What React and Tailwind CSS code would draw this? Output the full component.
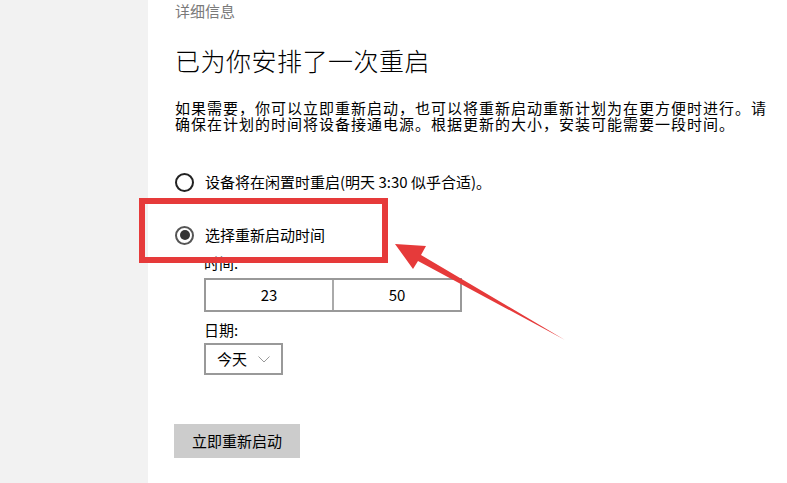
import React from "react";

const font = { fontFamily: '"Noto Sans CJK SC", "Noto Sans", sans-serif' };

function Radio({ checked, label }) {
  return (
    <div className="flex items-center h-[20px]">
      <span
        className={
          "w-[19px] h-[19px] rounded-full border-2 flex items-center justify-center " +
          (checked ? "border-[#555]" : "border-[#222]")
        }
      >
        {checked && <span className="w-[10px] h-[10px] rounded-full bg-[#333]" />}
      </span>
      <span className="ml-[11px] text-[15px] leading-[20px] text-black">{label}</span>
    </div>
  );
}

export default function App() {
  return (
    <div className="relative flex h-[483px] w-[787px] overflow-hidden bg-white" style={font}>
      {/* 侧边栏 */}
      <div className="w-[148px] h-full bg-[#f2f2f2]" />

      {/* 内容 */}
      <div className="flex-1 pl-[27px] pt-[1px]">
        <div className="text-[15px] leading-[20px] text-[#7a7a7a]">详细信息</div>

        <h1 className="mt-[23px] text-[25px] leading-[32px] font-light text-black tracking-[0.5px]">
          已为你安排了一次重启
        </h1>

        <p className="mt-[24px] text-[15px] leading-[16px] tracking-[1px] text-black">
          如果需要，你可以立即重新启动，也可以将重新启动重新计划为在更方便时进行。请
          <br />
          确保在计划的时间将设备接通电源。根据更新的大小，安装可能需要一段时间。
        </p>

        <div className="mt-[40px]">
          <Radio label="设备将在闲置时重启(明天 3:30 似乎合适)。" />
        </div>
        <div className="mt-[33px]">
          <Radio checked label="选择重新启动时间" />
        </div>

        <div className="ml-[29px]">
          <div className="mt-[8px] text-[15px] leading-[20px] text-black">时间:</div>
          <div className="mt-[5px] flex w-[258px] h-[34px] border-2 border-[#999]">
            <div className="flex-1 flex items-center justify-center text-[15px] text-black border-r-2 border-[#aaa]">
              23
            </div>
            <div className="flex-1 flex items-center justify-center text-[15px] text-black">50</div>
          </div>

          <div className="mt-[8px] text-[15px] leading-[20px] text-black">日期:</div>
          <div className="mt-[3px] flex items-center w-[79px] h-[32px] border-2 border-[#999] pl-[11px]">
            <span className="text-[15px] text-black">今天</span>
            <svg className="ml-[11px]" width="12" height="7" viewBox="0 0 12 7" fill="none">
              <path d="M0.5 0.5 L6 6 L11.5 0.5" stroke="#999" strokeWidth="1" />
            </svg>
          </div>
        </div>

        <button className="mt-[49px] -ml-px w-[126px] h-[34px] bg-[#cccccc] text-[15px] text-black">
          立即重新启动
        </button>
      </div>

      {/* 标注 */}
      <div className="absolute left-[139px] top-[198px] w-[249px] h-[65px] border-[6px] border-[#e63a3a]" />
      <svg className="absolute left-0 top-0 pointer-events-none" width="787" height="483">
        <polygon
          points="395,244 426,246 421,255 565,340 418,261 413,269"
          fill="#e63a3a"
        />
      </svg>
    </div>
  );
}
